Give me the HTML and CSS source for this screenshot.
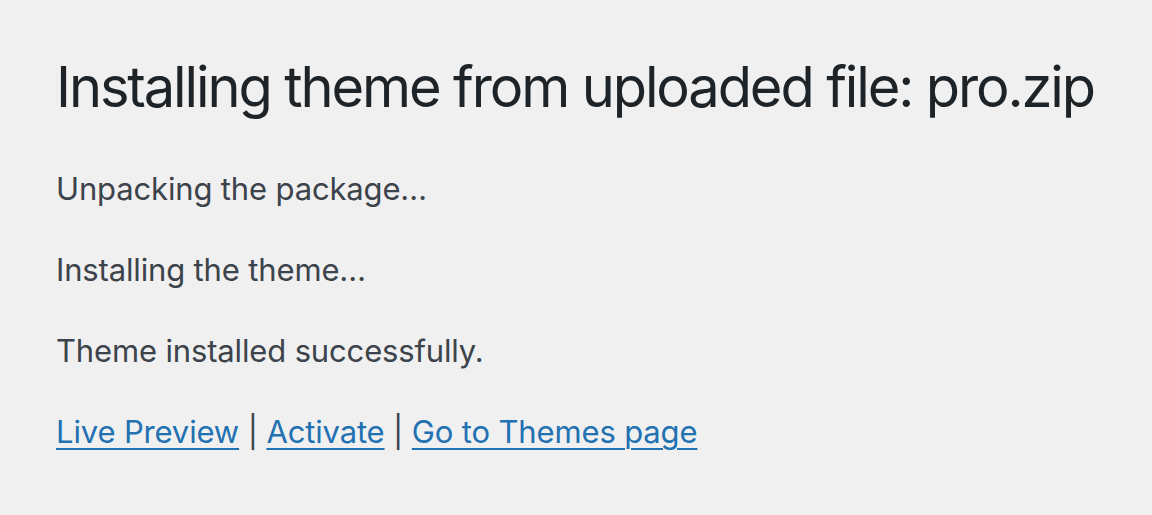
FILE: index.html
```html
<!DOCTYPE html>
<html>
<head>
<meta charset="utf-8">
<link rel="stylesheet" href="styles.css">
</head>
<body>
<div class="wrap">
  <h1 class="title">Installing theme from uploaded file: pro.zip</h1>
  <p class="msg">Unpacking the package…</p>
  <p class="msg">Installing the theme…</p>
  <p class="msg">Theme installed successfully.</p>
  <p class="msg actions"><a href="#">Live Preview</a> | <a href="#">Activate</a> | <a href="#">Go to Themes page</a></p>
</div>
</body>
</html>
```
FILE: styles.css
```css
html, body {
  margin: 0;
  padding: 0;
  background: #f0f0f1;
}
body {
  font-family: Inter, "Noto Sans", sans-serif;
  color: #3c434a;
  width: 1152px;
  height: 515px;
  overflow: hidden;
}
.wrap {
  padding: 50px 0 0 56px;
}
.title {
  margin: 0 0 40px;
  font-size: 56px;
  font-weight: 400;
  line-height: 75px;
  letter-spacing: -2.12px;
  white-space: nowrap;
  color: #1d2327;
}
.msg {
  margin: 0 0 32.5px;
  font-size: 31px;
  line-height: 48.5px;
  letter-spacing: -0.15px;
}
.actions a {
  color: #2271b1;
  text-decoration: underline;
  text-underline-offset: 5px;
  text-decoration-thickness: 2px;
}
```
